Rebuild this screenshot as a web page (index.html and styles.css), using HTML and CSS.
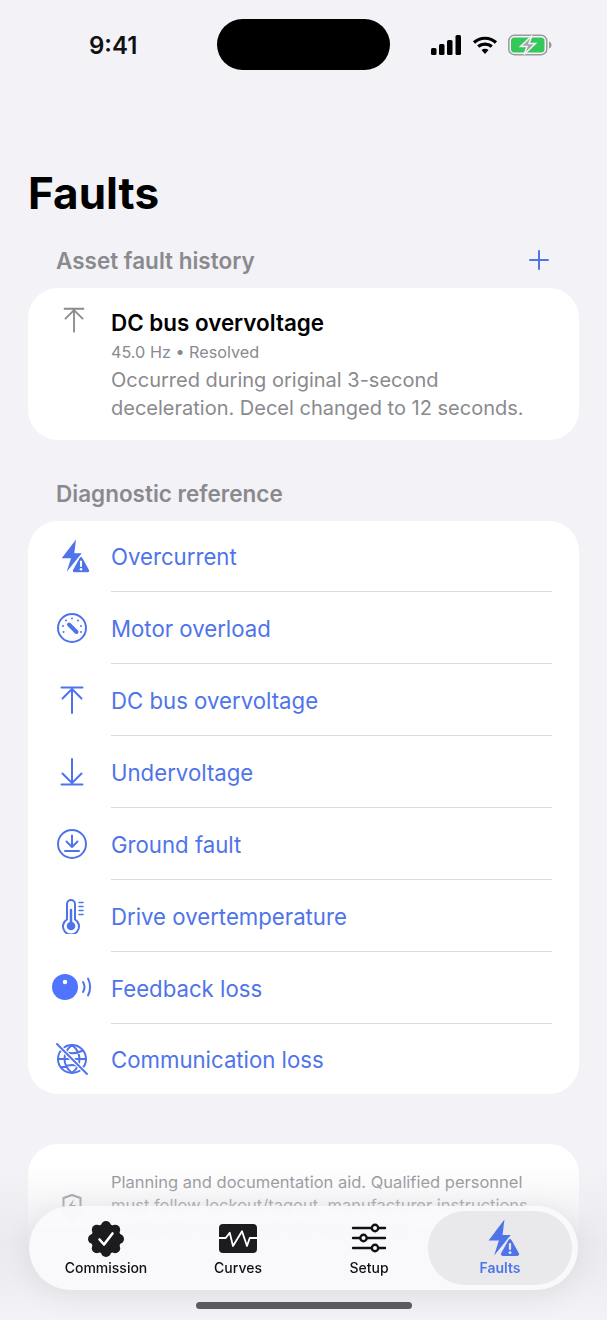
FILE: index.html
```html
<!DOCTYPE html>
<html lang="en">
<head>
    <meta charset="UTF-8">
    <meta name="viewport" content="width=device-width, initial-scale=1.0">
    <title>Faults</title>
    <link rel="stylesheet" href="styles.css">
</head>
<body>

<svg class="defs" width="0" height="0">
    <symbol id="bolt-warn" viewBox="0 0 36 36">
        <path d="M22 .5 7.700 19.300H17L12.700 32.800 27.700 14.300H20.300Z" fill="currentColor"/>
        <path d="M27 17.500c-.8 0-1.400.4-1.900 1.200l-6.600 11.900c-.9 1.600.1 3.200 1.900 3.200h13.200c1.800 0 2.800-1.600 1.900-3.200l-6.600-11.900c-.5-.8-1.100-1.200-1.900-1.200Z" fill="currentColor" stroke="var(--gap)" stroke-width="1.200"/>
        <rect x="26" y="21.500" width="2" height="6.500" rx="1" fill="var(--gap)"/>
        <circle cx="27" cy="30.300" r="1.300" fill="var(--gap)"/>
    </symbol>
    <symbol id="arrow-top" viewBox="0 0 36 36" fill="none" stroke="currentColor" stroke-width="2" stroke-linecap="round" stroke-linejoin="round">
        <path d="M7.500 5.500h21M18 31V6.500M8.500 16.500 18 7l9.500 9.500"/>
    </symbol>
</svg>

<div class="screen">
    <div class="status-bar">
        <span class="time">9:41</span>
        <div class="island"></div>
        <div class="status-icons">
            <svg width="31" height="20" viewBox="0 0 31 20" fill="#000">
                <rect x="0" y="13" width="5.500" height="7" rx="1.500"/>
                <rect x="8" y="9" width="5.500" height="11" rx="1.500"/>
                <rect x="16" y="5" width="5.500" height="15" rx="1.500"/>
                <rect x="24.500" y="0" width="5.500" height="20" rx="1.500"/>
            </svg>
            <svg width="26" height="20" viewBox="0 0 26 20" fill="none" stroke="#000" stroke-width="3.200">
                <path d="M2 7.500c6-5.700 16-5.700 22 0M6.200 11.500c3.800-3.300 9.800-3.300 13.600 0"/>
                <path d="M9.500 15 13 19l3.500-4c-2-1.700-5-1.700-7 0Z" fill="#000" stroke="none"/>
            </svg>
            <svg width="44" height="22" viewBox="0 0 44 22">
                <rect x=".8" y="1.300" width="38" height="19.400" rx="5.500" fill="none" stroke="#9b9b9f" stroke-width="1.500"/>
                <rect x="3" y="3.500" width="33.500" height="15" rx="3.500" fill="#34c759"/>
                <path d="M41 7.500c1.800.5 2.500 2 2.500 3.500s-.7 3-2.500 3.500Z" fill="#9b9b9f"/>
                <path d="M24 1.500 12.500 12.500h6.500L16 20.500 27.500 9.500h-6.500Z" fill="#a5a5aa" stroke="#f2f2f7" stroke-width="1.500"/>
            </svg>
        </div>
    </div>

    <h1>Faults</h1>

    <div class="section-head">
        <h2>Asset fault history</h2>
        <svg width="22" height="22" viewBox="0 0 22 22" stroke="#4f74ea" stroke-width="2" stroke-linecap="round"><path d="M11 2v18M2 11h18"/></svg>
    </div>

    <div class="card history">
        <svg class="history-icon" width="36" height="36"><use href="#arrow-top"/></svg>
        <div class="history-text">
            <h3>DC bus overvoltage</h3>
            <p class="meta">45.0 Hz • Resolved</p>
            <p class="note">Occurred during original 3-second deceleration. Decel changed to 12 seconds.</p>
        </div>
    </div>

    <div class="section-head second">
        <h2>Diagnostic reference</h2>
    </div>

    <div class="card ref-list">
        <div class="ref-row">
            <svg class="ref-icon" width="36" height="36"><use href="#bolt-warn"/></svg>
            <div class="ref-label">Overcurrent</div>
        </div>
        <div class="ref-row">
            <svg class="ref-icon" width="36" height="36" viewBox="0 0 36 36" fill="none" stroke="currentColor" stroke-width="2">
                <circle cx="18" cy="18" r="14"/>
                <path d="M15 14.500l7.500 7.500" stroke-width="4" stroke-linecap="round"/>
                <g fill="currentColor" stroke="none">
                    <circle cx="18" cy="8.500" r="1"/><circle cx="12" cy="10.500" r="1"/><circle cx="24" cy="10.500" r="1"/>
                    <circle cx="9" cy="16" r="1"/><circle cx="27" cy="16" r="1"/><circle cx="9.500" cy="22" r="1"/><circle cx="27" cy="22" r="1"/>
                </g>
            </svg>
            <div class="ref-label">Motor overload</div>
        </div>
        <div class="ref-row">
            <svg class="ref-icon" width="36" height="36"><use href="#arrow-top"/></svg>
            <div class="ref-label">DC bus overvoltage</div>
        </div>
        <div class="ref-row">
            <svg class="ref-icon" width="36" height="36" viewBox="0 0 36 36" fill="none" stroke="currentColor" stroke-width="2" stroke-linecap="round" stroke-linejoin="round">
                <path d="M7.500 30.500h21M18 5v24.500M8.500 19.500 18 29l9.500-9.500"/>
            </svg>
            <div class="ref-label">Undervoltage</div>
        </div>
        <div class="ref-row">
            <svg class="ref-icon" width="36" height="36" viewBox="0 0 36 36" fill="none" stroke="currentColor" stroke-width="2" stroke-linecap="round" stroke-linejoin="round">
                <circle cx="18" cy="18" r="14"/>
                <path d="M11 25h14M18 9.500V20.500M12.500 15.500 18 21l5.500-5.500"/>
            </svg>
            <div class="ref-label">Ground fault</div>
        </div>
        <div class="ref-row">
            <svg class="ref-icon" width="36" height="36" viewBox="0 0 36 36" fill="none" stroke="currentColor" stroke-width="2" stroke-linecap="round">
                <path d="M13 21.500V6a4 4 0 0 1 8 0v15.500a8 8 0 1 1-8 0Z"/>
                <circle cx="17" cy="28" r="4.300" fill="currentColor" stroke="none"/>
                <path d="M17 28V12" stroke-width="2.500"/>
                <path d="M25 4.500h4M25 8.500h4M25 12.500h4M25 16.500h4" stroke-width="1.500"/>
            </svg>
            <div class="ref-label">Drive overtemperature</div>
        </div>
        <div class="ref-row">
            <svg class="ref-icon wide" width="40" height="36" viewBox="0 0 40 36" fill="none" stroke="currentColor" stroke-width="2" stroke-linecap="round">
                <circle cx="13" cy="17" r="13" fill="#4f74ff" stroke="none"/>
                <circle cx="13" cy="12" r="2.200" fill="#fff" stroke="none"/>
                <path d="M31 12c1.800 3 1.800 7 0 10M36 8.500c2.800 5 2.800 12 0 17"/>
            </svg>
            <div class="ref-label">Feedback loss</div>
        </div>
        <div class="ref-row">
            <svg class="ref-icon" width="36" height="36" viewBox="0 0 36 36" fill="none" stroke="currentColor" stroke-width="2" stroke-linecap="round">
                <circle cx="18" cy="18" r="14"/>
                <path d="M4 18h28M18 4c-5 4-7.500 9-7.500 14s2.500 10 7.500 14M18 4c5 4 7.500 9 7.500 14s-2.500 10-7.500 14M7 9.500c6.500 3.500 15.500 3.500 22 0M7 26.500c6.500-3.500 15.500-3.500 22 0"/>
                <path d="M3 3l30 30" stroke="#fff" stroke-width="4.500"/>
                <path d="M3 3l30 30"/>
            </svg>
            <div class="ref-label">Communication loss</div>
        </div>
    </div>

    <div class="card disclaimer">
        <svg class="ref-icon grey" width="36" height="36" viewBox="0 0 36 36" fill="none" stroke="currentColor" stroke-width="2" stroke-linejoin="round">
            <path d="M18 7l8.500 3v9c0 5-3.500 8.500-8.500 11-5-2.500-8.500-6-8.500-11v-9Z"/>
            <path d="M20 11l-6 8h4l-2 6 6-8h-4Z" fill="currentColor" stroke="none"/>
        </svg>
        <p>Planning and documentation aid. Qualified personnel must follow lockout/tagout, manufacturer instructions, applicable codes, and site procedures.</p>
    </div>

    <div class="fade"></div>

    <nav class="tab-bar">
        <div class="tab">
            <svg width="38" height="38" viewBox="0 0 38 38">
                <g fill="#1c1c1e">
                    <circle cx="19" cy="19" r="15"/>
                    <circle cx="19" cy="6" r="5"/><circle cx="19" cy="32" r="5"/>
                    <circle cx="6" cy="19" r="5"/><circle cx="32" cy="19" r="5"/>
                    <circle cx="9.800" cy="9.800" r="5"/><circle cx="28.200" cy="9.800" r="5"/>
                    <circle cx="9.800" cy="28.200" r="5"/><circle cx="28.200" cy="28.200" r="5"/>
                </g>
                <path d="M12.500 19.500l4.500 5 8.500-11" fill="none" stroke="#fff" stroke-width="2.600" stroke-linecap="round" stroke-linejoin="round"/>
            </svg>
            <span>Commission</span>
        </div>
        <div class="tab">
            <svg width="38" height="38" viewBox="0 0 38 38">
                <rect x="0" y="4" width="38" height="29" rx="4" fill="#1c1c1e"/>
                <path d="M0 18h6.700l4-5.300L14 26l9-14.700L28 26l2.700-8H38" fill="none" stroke="#fff" stroke-width="1.800" stroke-linejoin="round"/>
            </svg>
            <span>Curves</span>
        </div>
        <div class="tab setup">
            <svg width="38" height="38" viewBox="0 0 38 38" fill="none" stroke="#111" stroke-width="2.400">
                <path d="M3 8h18M29 8h6M3 18h7M17 18h18M3 28h18M29 28h6" stroke-linecap="round"/>
                <circle cx="25" cy="8" r="3.200"/>
                <circle cx="13.500" cy="18" r="3.200"/>
                <circle cx="25" cy="28" r="3.200"/>
            </svg>
            <span>Setup</span>
        </div>
        <div class="tab active">
            <svg width="40" height="40"><use href="#bolt-warn"/></svg>
            <span>Faults</span>
        </div>
    </nav>

    <div class="home-bar"></div>
</div>

</body>
</html>
```

FILE: styles.css
```css
* {
    box-sizing: border-box;
    margin: 0;
    padding: 0;
}

body {
    font-family: Inter, "Liberation Sans", sans-serif;
    background-color: #f2f2f7;
}

.defs {
    display: block;
    height: 0;
}

.screen {
    --gap: #fff;
    position: relative;
    width: 607px;
    height: 1320px;
    padding-top: 19px;
    overflow: hidden;
    background-color: #f2f2f7;
}

/* Status bar */
.status-bar {
    display: flex;
    align-items: center;
    height: 51px;
    padding-left: 89px;
}

.time {
    width: 128px;
    padding-top: 2px;
    font-size: 24px;
    font-weight: 600;
    color: #111;
}

.island {
    width: 173px;
    height: 51px;
    border-radius: 26px;
    background-color: #000;
}

.status-icons {
    display: flex;
    align-items: center;
    gap: 10px;
    margin-left: 41px;
}

h1 {
    margin: 96px 0 0 28px;
    font-size: 44px;
    line-height: 54px;
    font-weight: 700;
    color: #000;
}

.section-head {
    display: flex;
    justify-content: space-between;
    align-items: center;
    height: 30px;
    margin-top: 25px;
    margin-bottom: 13px;
    padding: 0 57px 0 56px;
}

.section-head.second {
    margin-top: 38px;
}

h2 {
    font-size: 22.5px;
    font-weight: 600;
    color: #8a8a8e;
}

.card {
    margin: 0 28px;
    background-color: #fff;
    border-radius: 30px;
}

/* Fault history */
.history {
    display: flex;
    height: 152px;
    padding-top: 20px;
}

.history-icon {
    flex: none;
    width: 36px;
    height: 36px;
    margin: -6px 19px 0 28px;
    transform: scale(0.9);
    color: #8a8a8e;
}

.history-text h3 {
    font-size: 22.4px;
    line-height: 30px;
    font-weight: 600;
    color: #000;
}

.meta {
    font-size: 16.2px;
    line-height: 28px;
    color: #8a8a8e;
}

.note {
    width: 420px;
    font-size: 20px;
    line-height: 28px;
    color: #8a8a8e;
}

/* Diagnostic list */
.ref-list {
    height: 573px;
    overflow: hidden;
}

.ref-row {
    display: flex;
    align-items: center;
    height: 72px;
    color: #4f74ea;
}

.ref-row:first-child {
    height: 71px;
}

.ref-row:last-child {
    height: 70px;
}

.ref-icon {
    flex: none;
    width: 36px;
    margin: 0 21px 0 26px;
}

.ref-icon.wide {
    width: 40px;
    margin: 0 19px 0 24px;
}

.ref-label {
    flex: 1;
    display: flex;
    align-items: center;
    height: 100%;
    margin-right: 27px;
    padding-top: 2px;
    font-size: 22.2px;
    border-bottom: 1px solid #dcdcdf;
}

.ref-row:first-child .ref-label {
    padding-top: 0;
}

.ref-row:last-child .ref-label {
    padding-top: 1px;
    border-bottom: none;
}

/* Disclaimer */
.disclaimer {
    display: flex;
    align-items: center;
    margin-top: 50px;
    padding: 27px 27px 27px 0;
}

.disclaimer .grey {
    color: #8a8a8e;
    margin-right: 21px;
}

.disclaimer p {
    font-size: 16.5px;
    line-height: 23px;
    color: #8a8a8e;
}

.fade {
    position: absolute;
    left: 0;
    right: 0;
    top: 1165px;
    bottom: 0;
    background: linear-gradient(rgba(242, 242, 247, 0), rgba(233, 233, 238, 0.85) 50%, #ececf1 70%, #f2f2f7);
}

/* Tab bar */
.tab-bar {
    --gap: #e9e9eb;
    position: absolute;
    left: 29px;
    top: 1206px;
    width: 549px;
    height: 84px;
    display: grid;
    grid-template-columns: 144px 120px 130px 144px;
    padding: 5px;
    border-radius: 42px;
    background-color: rgba(251, 251, 253, 0.88);
    backdrop-filter: blur(2px);
    box-shadow: 0 4px 30px rgba(0, 0, 0, 0.08);
}

.tab {
    display: flex;
    flex-direction: column;
    align-items: center;
    justify-content: center;
    gap: 1px;
    border-radius: 37px;
    font-size: 14px;
    font-weight: 500;
    color: #111;
}

.tab.setup {
    padding-left: 12px;
}

.tab.active {
    background-color: #e9e9eb;
    color: #4f74ea;
    font-weight: 600;
}

.tab.active svg {
    margin: -1px 0;
}

.home-bar {
    position: absolute;
    left: 196px;
    top: 1302px;
    width: 216px;
    height: 7px;
    border-radius: 4px;
    background-color: #5c5c60;
}
```
